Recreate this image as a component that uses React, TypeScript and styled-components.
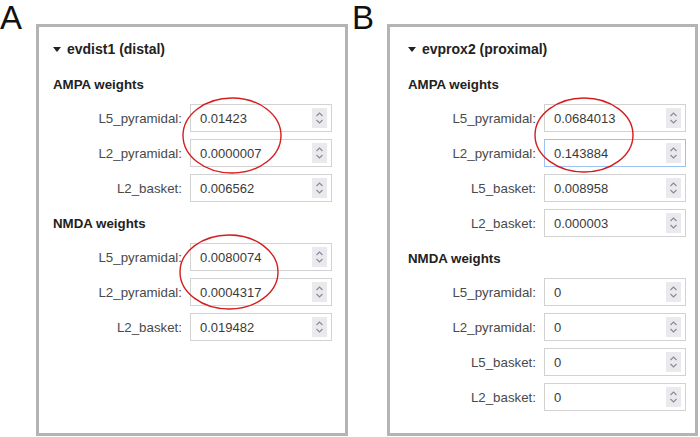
import React from 'react';
import styled, { createGlobalStyle } from 'styled-components';

const GlobalStyle = createGlobalStyle`
  html, body {
    margin: 0;
    padding: 0;
    background: #ffffff;
  }
  body {
    font-family: 'Liberation Sans', Arial, sans-serif;
  }
`;

interface Field {
  label: string;
  value: string;
  focused?: boolean;
}

interface Section {
  title: string;
  fields: Field[];
}

interface PanelData {
  letter: string;
  title: string;
  sections: Section[];
}

const panels: PanelData[] = [
  {
    letter: 'A',
    title: 'evdist1 (distal)',
    sections: [
      {
        title: 'AMPA weights',
        fields: [
          { label: 'L5_pyramidal:', value: '0.01423' },
          { label: 'L2_pyramidal:', value: '0.0000007' },
          { label: 'L2_basket:', value: '0.006562' },
        ],
      },
      {
        title: 'NMDA weights',
        fields: [
          { label: 'L5_pyramidal:', value: '0.0080074' },
          { label: 'L2_pyramidal:', value: '0.0004317' },
          { label: 'L2_basket:', value: '0.019482' },
        ],
      },
    ],
  },
  {
    letter: 'B',
    title: 'evprox2 (proximal)',
    sections: [
      {
        title: 'AMPA weights',
        fields: [
          { label: 'L5_pyramidal:', value: '0.0684013' },
          { label: 'L2_pyramidal:', value: '0.143884', focused: true },
          { label: 'L5_basket:', value: '0.008958' },
          { label: 'L2_basket:', value: '0.000003' },
        ],
      },
      {
        title: 'NMDA weights',
        fields: [
          { label: 'L5_pyramidal:', value: '0' },
          { label: 'L2_pyramidal:', value: '0' },
          { label: 'L5_basket:', value: '0' },
          { label: 'L2_basket:', value: '0' },
        ],
      },
    ],
  },
];

// red annotation ellipses, page coordinates
const marks = [
  { cx: 232, cy: 135.5, rx: 49, ry: 37.5 },
  { cx: 229, cy: 272, rx: 49, ry: 37 },
  { cx: 584, cy: 135, rx: 49, ry: 37 },
];

const Page = styled.div`
  position: relative;
  width: 700px;
  height: 437px;
  display: flex;
  overflow: hidden;
`;

const Figure = styled.div<{ $offset: number }>`
  display: flex;
  margin-left: ${(p) => p.$offset}px;
`;

const Letter = styled.div<{ $width: number }>`
  width: ${(p) => p.$width}px;
  font-size: 33px;
  line-height: 36px;
  color: #111;
`;

const Panel = styled.div<{ $width: number; $padLeft: number }>`
  box-sizing: border-box;
  width: ${(p) => p.$width}px;
  height: 412px;
  margin-top: 24px;
  border: 3px solid #b4b4b4;
  padding: 12px 0 0 ${(p) => p.$padLeft}px;
  background: #fff;
`;

const Summary = styled.div`
  display: flex;
  align-items: center;
  gap: 6px;
  height: 20px;
  font-size: 14px;
  font-weight: bold;
  color: #222;
`;

const Caret = styled.span`
  width: 0;
  height: 0;
  border-left: 4px solid transparent;
  border-right: 4px solid transparent;
  border-top: 5px solid #222;
  margin-top: 1px;
`;

const SectionTitle = styled.div<{ $first: boolean }>`
  margin-top: ${(p) => (p.$first ? 17 : 13)}px;
  margin-bottom: 10px;
  height: 18px;
  line-height: 18px;
  font-size: 13.3px;
  font-weight: bold;
  color: #222;
`;

const Grid = styled.div<{ $labelWidth: number }>`
  display: grid;
  grid-template-columns: ${(p) => p.$labelWidth}px 142px;
  column-gap: 8px;
  row-gap: 7px;
  align-items: center;
`;

const Label = styled.label`
  text-align: right;
  font-size: 13.3px;
  color: #4a4a4a;
`;

const InputBox = styled.div<{ $focused?: boolean }>`
  box-sizing: border-box;
  height: 28px;
  display: flex;
  align-items: center;
  justify-content: space-between;
  padding: 0 4px 0 9px;
  border: 1px solid ${(p) => (p.$focused ? '#9cc2f2' : '#d2d2d2')};
  background: #fff;
  font-size: 13px;
  color: #3a3a3a;
`;

const Spinner = styled.div`
  width: 15px;
  height: 20px;
  background: #e9e9ee;
  display: flex;
  align-items: center;
  justify-content: center;
`;

const Overlay = styled.svg`
  position: absolute;
  left: 0;
  top: 0;
  pointer-events: none;
`;

const SpinIcon = () => (
  <svg width="9" height="14" viewBox="0 0 9 14">
    <path d="M1.5 5 L4.5 2 L7.5 5" fill="none" stroke="#8a8a92" strokeWidth="1.1" />
    <path d="M1.5 9 L4.5 12 L7.5 9" fill="none" stroke="#8a8a92" strokeWidth="1.1" />
  </svg>
);

const layout = [
  { offset: 0, letterWidth: 36, width: 312, padLeft: 14, labelWidth: 129 },
  { offset: 4, letterWidth: 35, width: 311, padLeft: 18, labelWidth: 128 },
];

const App: React.FC = () => {
  return (
    <>
      <GlobalStyle />
      <Page>
        {panels.map((panel, i) => {
          const l = layout[i];
          return (
            <Figure key={panel.letter} $offset={l.offset}>
              <Letter $width={l.letterWidth}>{panel.letter}</Letter>
              <Panel $width={l.width} $padLeft={l.padLeft}>
                <Summary>
                  <Caret />
                  {panel.title}
                </Summary>
                {panel.sections.map((section, si) => (
                  <div key={section.title}>
                    <SectionTitle $first={si === 0}>{section.title}</SectionTitle>
                    <Grid $labelWidth={l.labelWidth}>
                      {section.fields.map((f) => (
                        <React.Fragment key={f.label}>
                          <Label>{f.label}</Label>
                          <InputBox $focused={f.focused}>
                            <span>{f.value}</span>
                            <Spinner>
                              <SpinIcon />
                            </Spinner>
                          </InputBox>
                        </React.Fragment>
                      ))}
                    </Grid>
                  </div>
                ))}
              </Panel>
            </Figure>
          );
        })}
        <Overlay width="700" height="437">
          {marks.map((m, i) => (
            <ellipse key={i} cx={m.cx} cy={m.cy} rx={m.rx} ry={m.ry} fill="none" stroke="#d41f1f" strokeWidth="1.4" />
          ))}
        </Overlay>
      </Page>
    </>
  );
};

export default App;
